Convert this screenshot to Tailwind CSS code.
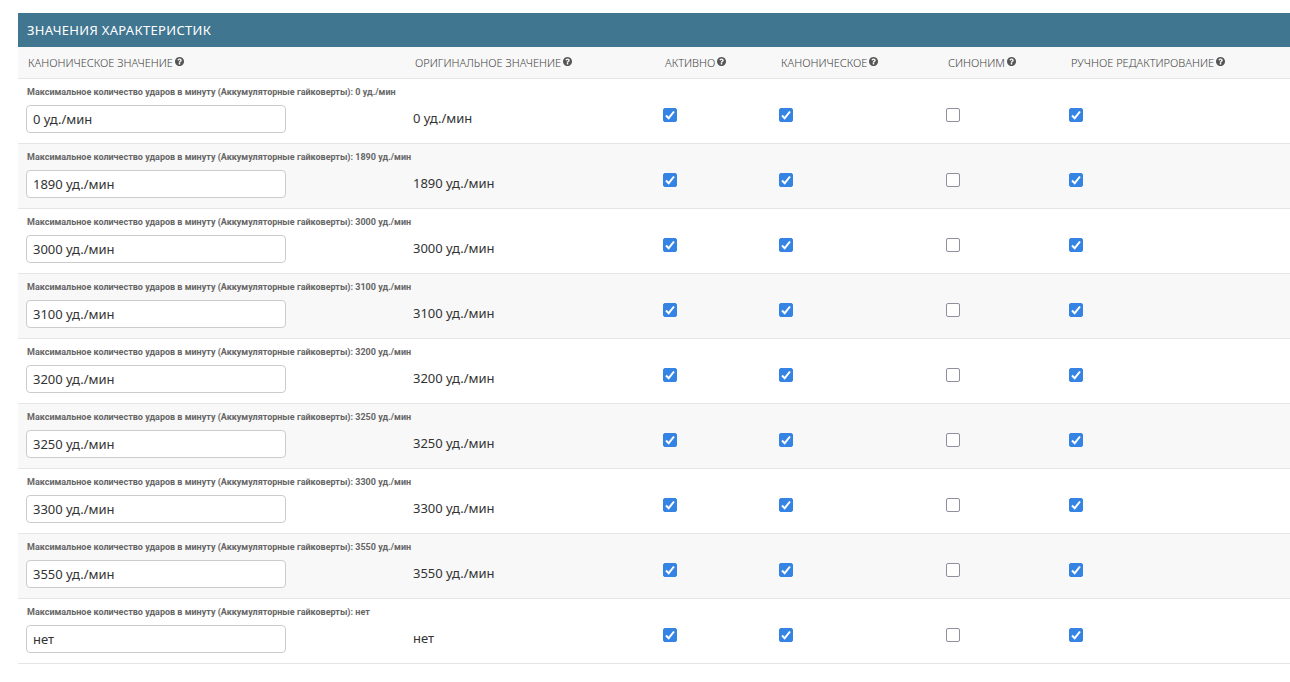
<!DOCTYPE html>
<html lang="ru">
<head>
  <meta charset="UTF-8">
  <meta name="viewport" content="width=device-width, initial-scale=1.0">
  <title>Значения характеристик</title>
  <script src="https://cdn.jsdelivr.net/npm/@tailwindcss/browser@4"></script>
</head>
<body class="bg-white pt-[13px] pl-[18px] pb-4 font-['Noto_Sans',sans-serif] text-[13px] text-[#333]">
  <svg class="hidden">
    <symbol id="help" viewBox="128 128 1536 1536">
      <path d="M1024 1376v-192q0-14-9-23t-23-9H800q-14 0-23 9t-9 23v192q0 14 9 23t23 9h192q14 0 23-9t9-23zm256-672q0-88-55.500-163T1086 425t-170-41q-243 0-371 213-15 24 8 42l132 100q7 6 19 6 16 0 25-12 53-68 86-92 34-24 86-24 48 0 85.500 26t37.500 59q0 38-20 61t-68 45q-63 28-115.500 86.500T768 1020v36q0 14 9 23t23 9h192q14 0 23-9t9-23q0-19 21.500-49.500T1100 957q32-18 49-28.500t46-35 44.500-48 28-60.500 12.500-81zm384 192q0 209-103 385.500T1281.500 1561 896 1664t-385.500-103T231 1281.500 128 896t103-385.500T510.500 231 896 128t385.500 103T1561 510.500 1664 896z"/>
    </symbol>
    <symbol id="tick" viewBox="0 0 14 14">
      <path d="M3 7.500 5.700 10.200 11 3.500" fill="none" stroke="#fff" stroke-width="2"/>
    </symbol>
  </svg>

  <h2 class="bg-[#417690] px-[9px] text-[13px] leading-[34px] font-normal tracking-wide uppercase text-white">Значения характеристик</h2>
  <table class="w-full table-fixed border-collapse">
    <colgroup>
      <col class="w-[387px]">
      <col class="w-[250px]">
      <col class="w-[116px]">
      <col class="w-[167px]">
      <col class="w-[123px]">
      <col>
    </colgroup>
    <thead>
      <tr id="head" class="h-[31px] border-b border-[#e6e6e6] bg-[#f8f8f8] text-left text-[11px] leading-4 text-[#444] uppercase"></tr>
    </thead>
    <tbody id="rows"></tbody>
  </table>

  <script>
    const property = 'Максимальное количество ударов в минуту (Аккумуляторные гайковерты)';
    const headers = ['Каноническое значение', 'Оригинальное значение', 'Активно', 'Каноническое', 'Синоним', 'Ручное редактирование'];
    const values = ['0 уд./мин', '1890 уд./мин', '3000 уд./мин', '3100 уд./мин', '3200 уд./мин', '3250 уд./мин', '3300 уд./мин', '3550 уд./мин', 'нет'];

    // The four tick box columns and their initial state
    const flags = [
      { name: 'active', label: 'Активно', checked: true },
      { name: 'canonical', label: 'Каноническое', checked: true },
      { name: 'synonym', label: 'Синоним', checked: false },
      { name: 'manual', label: 'Ручное редактирование', checked: true }
    ];

    document.getElementById('head').innerHTML = headers.map(h => `
      <th scope="col" class="px-[10px] pt-px font-light whitespace-nowrap">
        <span class="flex items-start gap-[2px]">${h}<svg class="mt-[2px] size-[9px] fill-[#555]"><use href="#help"/></svg></span>
      </th>`).join('');

    document.getElementById('rows').innerHTML = values.map((v, i) => `
      <tr class="h-[65px] border-b border-[#e6e6e6] even:bg-[#f8f8f8]">
        <td class="px-2 pt-[6px] align-top">
          <label for="value-${i}" class="block pl-px font-[Roboto,sans-serif] text-[9px] leading-[14px] font-bold whitespace-nowrap text-[#666]">${property}: ${v}</label>
          <input type="text" id="value-${i}" value="${v}" class="mt-[6px] block h-7 w-[260px] rounded border border-[#ccc] bg-white px-[6px] text-[13px]">
        </td>
        <td class="px-2 pt-[29px] align-top leading-[20px]">${v}</td>
        ${flags.map(f => `
        <td class="px-2 pt-[29px] align-top">
          <label class="grid size-[14px]">
            <input type="checkbox" name="${f.name}-${i}" aria-label="${f.label}: ${v}" ${f.checked ? 'checked' : ''} class="peer col-start-1 row-start-1 size-[14px] appearance-none rounded-[2px] border border-[#8f8f9d] bg-white checked:border-[#3584e4] checked:bg-[#3584e4]">
            <svg class="pointer-events-none invisible col-start-1 row-start-1 size-[14px] peer-checked:visible"><use href="#tick"/></svg>
          </label>
        </td>`).join('')}
      </tr>`).join('');
  </script>
</body>
</html>
